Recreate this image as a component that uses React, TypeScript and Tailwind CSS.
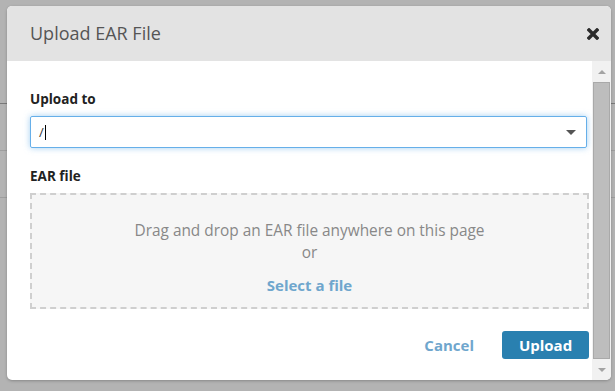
import React from 'react';

function CloseIcon() {
    return (
        <svg width="12" height="12" viewBox="0 0 12 12" className="text-[#2b2b2b]">
            <path d="M2 2L10 10M10 2L2 10" stroke="currentColor" strokeWidth={3.4} strokeLinecap="square" />
        </svg>
    );
}

function FakeScrollbar() {
    return (
        <div className="w-[19px] h-full bg-[#f1f1f1] flex flex-col items-center">
            <div className="h-[21px] flex items-center justify-center pt-[1px]">
                <div className="w-0 h-0 border-l-[4px] border-r-[4px] border-b-[4px] border-l-transparent border-r-transparent border-b-[#a3a3a3]" />
            </div>
            <div className="w-[17px] h-[277px] bg-[#bdbdbd] border border-[#a9a9a9]" />
            <div className="flex-1 flex items-center justify-center">
                <div className="w-0 h-0 border-l-[4px] border-r-[4px] border-t-[4px] border-l-transparent border-r-transparent border-t-[#a3a3a3]" />
            </div>
        </div>
    );
}

export default function App() {
    return (
        <div className="relative w-[615px] h-[391px] bg-[#b3b3b3] overflow-hidden" style={{ fontFamily: '"Open Sans", "Noto Sans", sans-serif' }}>
            {/* page behind the overlay */}
            <div className="absolute left-0 right-0 top-[103px] h-px bg-[#7a7a7a]" />
            <div className="absolute left-0 right-0 top-[150px] h-px bg-[#9e9e9e]" />
            <div className="absolute left-0 right-0 top-[197px] h-px bg-[#9e9e9e]" />

            {/* Modal */}
            <div className="absolute left-[7px] top-[6px] w-[604px] h-[374px] rounded-[5px] bg-white overflow-hidden flex flex-col shadow-[0_1px_3px_rgba(0,0,0,0.25)]">
                <div className="h-[55px] bg-[#e3e3e3] flex items-center justify-between pl-[23px] pr-[12px] shrink-0">
                    <h1 className="text-[18px] text-[#555] leading-none -mt-[1px]">Upload EAR File</h1>
                    <CloseIcon />
                </div>

                <div className="flex flex-1 min-h-0">
                    <div className="flex-1 pl-[23px] pt-[29px]">
                        <label className="block text-[13.5px] font-bold text-[#222] leading-[18px]">Upload to</label>
                        <div className="mt-[8px] w-[557px] h-[32px] border border-[#66afe9] rounded-[2px] shadow-[0_0_6px_rgba(102,175,233,0.6)] flex items-center pl-[8px] pr-[10px]">
                            <span className="text-[13px] text-[#333] leading-none">/</span>
                            <span className="w-px h-[15px] bg-black ml-[1px]" />
                            <span className="ml-auto w-0 h-0 border-l-[5px] border-r-[5px] border-t-[5px] border-l-transparent border-r-transparent border-t-[#555]" />
                        </div>

                        <label className="block mt-[19px] text-[13.5px] font-bold text-[#222] leading-[18px]">EAR file</label>
                        <div className="mt-[8px] w-[559px] h-[116px] border-2 border-dashed border-[#cfcfcf] bg-[#f6f6f6] flex flex-col items-center pt-[25px]">
                            <p className="text-[15.4px] text-[#888] leading-[22px]">Drag and drop an EAR file anywhere on this page</p>
                            <p className="text-[15.4px] text-[#888] leading-[22px]">or</p>
                            <p className="mt-[10px] text-[15px] font-bold text-[#6fa6cd] leading-[22px]">Select a file</p>
                        </div>

                        <div className="mt-[22px] w-[559px] flex items-center justify-end">
                            <span className="text-[15px] font-bold text-[#6fa6cd] mr-[28px]">Cancel</span>
                            <button className="w-[87px] h-[28px] rounded-[3px] bg-[#2980b0] text-white text-[15px] font-bold">Upload</button>
                        </div>
                    </div>
                    <FakeScrollbar />
                </div>
            </div>
        </div>
    );
}
